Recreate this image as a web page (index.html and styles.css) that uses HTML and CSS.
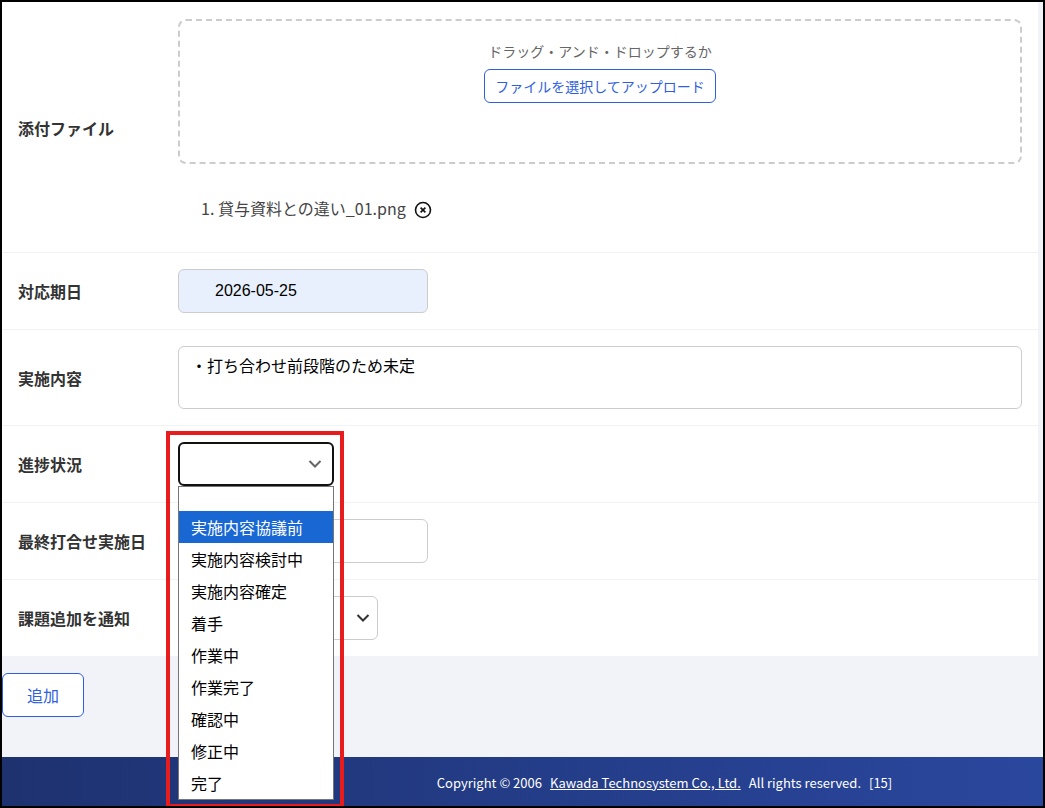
FILE: index.html
```html
<!DOCTYPE html>
<html lang="ja">
<head>
	<meta charset="UTF-8">
	<meta name="viewport" content="width=device-width, initial-scale=1.0">
	<title>課題追加</title>
	<link rel="stylesheet" href="styles.css">
</head>
<body>

<main>
<form>
	<div class="rows">

		<div class="row">
			<label class="name" for="upload">添付ファイル</label>
			<div class="field">
				<div class="dropzone">
					<p>ドラッグ・アンド・ドロップするか</p>
					<button type="button" class="btn upload" id="upload">ファイルを選択してアップロード</button>
				</div>
				<ol class="files">
					<li>
						<span>貸与資料との違い_01.png</span>
						<button type="button" class="remove" aria-label="削除">
							<svg width="18" height="18" viewBox="0 0 18 18" fill="none" stroke="#111">
								<circle cx="9" cy="9" r="7.5" stroke-width="1.6"/>
								<path d="M6.6 6.6l4.8 4.8M11.4 6.6l-4.8 4.8" stroke-width="1.6"/>
							</svg>
						</button>
					</li>
				</ol>
			</div>
		</div>

		<div class="row">
			<label class="name" for="due">対応期日</label>
			<div class="field">
				<input type="text" class="date filled" id="due" value="2026-05-25">
			</div>
		</div>

		<div class="row">
			<label class="name" for="content">実施内容</label>
			<div class="field">
				<textarea id="content">・打ち合わせ前段階のため未定</textarea>
			</div>
		</div>

		<div class="row">
			<label class="name" for="progress">進捗状況</label>
			<div class="field">
				<div class="select open">
					<select id="progress">
						<option></option>
					</select>
					<svg class="arrow" width="14" height="8" viewBox="0 0 14 8" fill="none" stroke="#666" stroke-width="2">
						<path d="M1.5 1L7 6.5 12.5 1"/>
					</svg>
					<ul class="menu" role="listbox" aria-label="進捗状況">
						<li role="option" class="empty"></li>
						<li role="option" class="active" aria-selected="true">実施内容協議前</li>
						<li role="option">実施内容検討中</li>
						<li role="option">実施内容確定</li>
						<li role="option">着手</li>
						<li role="option">作業中</li>
						<li role="option">作業完了</li>
						<li role="option">確認中</li>
						<li role="option">修正中</li>
						<li role="option">完了</li>
					</ul>
					<div class="marker"></div>
				</div>
			</div>
		</div>

		<div class="row">
			<label class="name" for="lastdate">最終打合せ実施日</label>
			<div class="field">
				<input type="text" class="date" id="lastdate">
			</div>
		</div>

		<div class="row">
			<label class="name" for="notify">課題追加を通知</label>
			<div class="field">
				<div class="select notify">
					<select id="notify">
						<option></option>
					</select>
					<svg class="arrow" width="14" height="8" viewBox="0 0 14 8" fill="none" stroke="#333" stroke-width="2">
						<path d="M1.5 1L7 6.5 12.5 1"/>
					</svg>
				</div>
			</div>
		</div>

	</div>

	<button type="button" class="btn add">追加</button>
</form>
</main>

<footer>
	<span>Copyright © 2006</span>
	<a href="#">Kawada Technosystem Co., Ltd.</a>
	<span>All rights reserved.</span>
	<span>[15]</span>
</footer>

</body>
</html>
```
FILE: styles.css
```css
* {
	box-sizing: border-box;
}
body {
	margin: 0;
	min-height: 100vh;
	display: flex;
	flex-direction: column;
	border: 2px solid #000;
	background: #f2f3f8;
	color: #333;
	font-family: "Noto Sans CJK JP", sans-serif;
	font-size: 16px;
	line-height: 24px;
}
input, textarea, select, button {
	font: inherit;
	color: #000;
}

/* form rows */
.rows {
	margin-right: 5px;
	padding-top: 1px;
	background: #fff;
}
.row {
	display: grid;
	grid-template-columns: 144px 1fr;
	gap: 16px;
	align-items: center;
	padding: 16px;
	border-bottom: 1px solid #f2f2f2;
}
.row:last-child {
	border-bottom: 0;
}
.name {
	font-weight: 700;
	white-space: nowrap;
}
.field {
	display: flex;
	flex-direction: column;
	align-items: flex-start;
}

/* attachments */
.dropzone {
	width: 100%;
	height: 145px;
	padding-top: 18px;
	border: 2px dashed #ccc;
	border-radius: 8px;
	text-align: center;
	font-size: 14px;
	color: #666;
}
.dropzone p {
	margin: 0 0 6px;
}
.files {
	margin: 32px 0 16px;
	padding-left: 40px;
	color: #444;
}
.files li span {
	margin-right: 5px;
}
.remove {
	padding: 0;
	border: 0;
	background: none;
	vertical-align: -4px;
}
.remove svg {
	display: block;
}

/* controls */
.btn {
	background: #fff;
	border: 1px solid #2f5fe0;
	border-radius: 6px;
	color: #2f5fe0;
}
.upload {
	height: 34px;
	padding: 0 10px;
}
.add {
	display: block;
	height: 44px;
	margin: 17px 0 40px;
	padding: 0 24px;
}
.date, textarea, select {
	border: 1px solid #ccc;
	border-radius: 6px;
	background: #fff;
}
.date {
	width: 250px;
	height: 44px;
	padding: 0 12px 0 36px;
	font-family: "Liberation Sans", sans-serif;
}
.filled {
	background: #e8f0fe;
}
textarea {
	display: block;
	width: 100%;
	height: 63px;
	padding: 6px 12px;
	resize: none;
}
.select {
	position: relative;
	display: grid;
	align-items: center;
	width: 156px;
	height: 44px;
}
.select select {
	grid-area: 1 / 1;
	width: 100%;
	height: 44px;
	padding: 0 12px;
	appearance: none;
}
.arrow {
	grid-area: 1 / 1;
	justify-self: end;
	margin-right: 12px;
	z-index: 1;
	pointer-events: none;
}
.notify {
	width: 200px;
}
.notify .arrow {
	margin-right: 8px;
}
.open select {
	border: 2px solid #111;
}

/* opened list */
.menu {
	position: absolute;
	top: 100%;
	left: 0;
	right: 0;
	z-index: 2;
	margin: 0;
	padding: 0;
	list-style: none;
	background: #fff;
	border: 1px solid #767676;
	color: #000;
}
.menu li {
	height: 32px;
	padding: 0 12px;
	line-height: 32px;
}
.menu .empty {
	height: 24px;
}
.menu .active {
	background: #1967d2;
	color: #fff;
}
.marker {
	position: absolute;
	top: -11px;
	left: -12px;
	right: -10px;
	height: 377px;
	border: 4px solid #e81c1c;
	z-index: 1;
	pointer-events: none;
}

footer {
	flex: 1;
	display: flex;
	align-items: center;
	justify-content: center;
	gap: 8px;
	padding: 14px 0 11px 284px;
	background: linear-gradient(90deg, #1e3270, #2a479e);
	color: #fff;
	font-size: 13px;
}
footer a {
	color: #fff;
}
```
